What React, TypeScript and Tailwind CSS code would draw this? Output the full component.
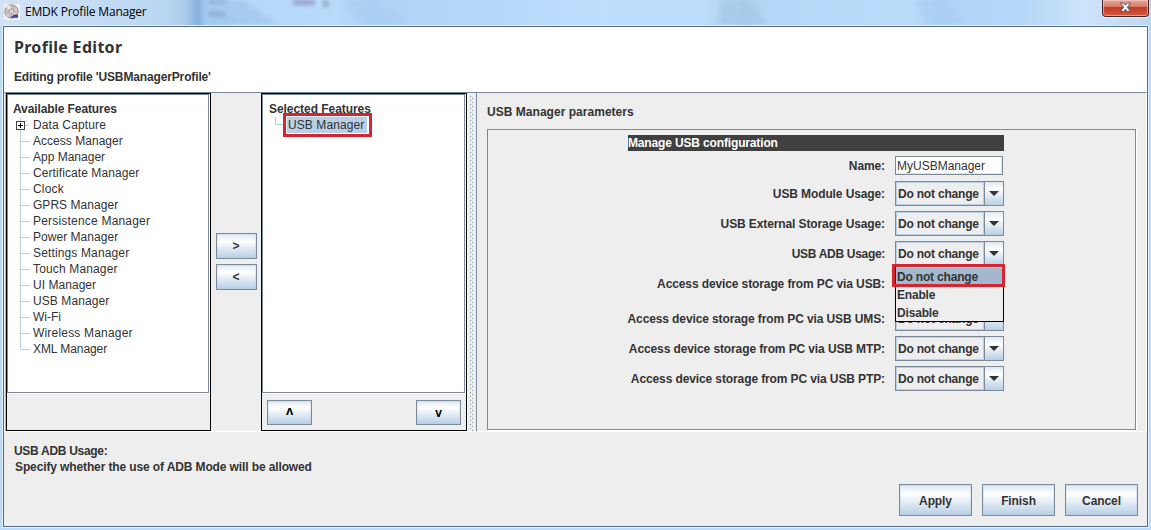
import React from "react";

const features = [
  ["Access Manager", "tracking-[0.03px]"],
  ["App Manager", "tracking-[0px]"],
  ["Certificate Manager", "tracking-[0.08px]"],
  ["Clock", "tracking-[0.2px]"],
  ["GPRS Manager", "tracking-[0.04px]"],
  ["Persistence Manager", "tracking-[0.2px]"],
  ["Power Manager", "tracking-[0.04px]"],
  ["Settings Manager", "tracking-[0.14px]"],
  ["Touch Manager", "tracking-[0.15px]"],
  ["UI Manager", "tracking-[0.04px]"],
  ["USB Manager", "tracking-[0.08px]"],
  ["Wi-Fi", "tracking-[0px]"],
  ["Wireless Manager", "tracking-[0.19px]"],
  ["XML Manager", "tracking-[-0.07px]"],
];

function Button({ label, className }: { label: string; className: string }) {
  return (
    <button
      className={`flex items-center justify-center border border-[#7a8a99] bg-linear-to-b from-[#dde8f3] via-white via-30% to-[#b8cfe5] font-bold shadow-[inset_0_0_0_1px_rgba(184,207,229,0.35)] ${className}`}
    >
      {label}
    </button>
  );
}

function Combo() {
  return (
    <div className="flex h-[25px] w-[109px] border border-[#7a8a99]">
      <div className="flex w-[88px] items-center border border-[#b8cfe5] pl-px font-bold tracking-[-0.2px] whitespace-nowrap">
        Do not change
      </div>
      <div className="flex flex-1 items-center justify-center border-l border-[#7a8a99] bg-linear-to-b from-[#dde8f3] via-white via-30% to-[#b8cfe5]">
        <svg width="10" height="5" viewBox="0 0 10 5">
          <path d="M0 0h10L5 5z" fill="#333" />
        </svg>
      </div>
    </div>
  );
}

interface FormRowProps {
  label: string;
  tracking?: string;
  className?: string;
  children: React.ReactNode;
}

function FormRow({ label, tracking = "tracking-[-0.11px]", className = "mb-[5px]", children }: FormRowProps) {
  return (
    <div className={`flex items-center justify-end ${className}`}>
      <span className={`mr-[10px] font-bold whitespace-nowrap ${tracking}`}>{label}</span>
      <div className="w-[109px]">{children}</div>
    </div>
  );
}

function DiscIcon() {
  return (
    <svg width="16" height="16" viewBox="0 0 16 16">
      <rect width="16" height="16" fill="#f4f2f4" />
      <circle cx="7.5" cy="7.5" r="6.7" fill="#c3bebf" stroke="#989398" />
      <path d="M7.5 7.5L2 3.5A7 7 0 0 1 6 1zM7.5 7.5l6 2a7 7 0 0 1-3 4z" fill="#eceaea" />
      <path d="M7.5 7.5l5-4 1 3zM7.5 7.5L2 11l2 2z" fill="#e0c9cb" />
      <circle cx="7.5" cy="7.5" r="2.5" fill="#f5f3f3" stroke="#a2868b" />
      <circle cx="7.5" cy="7.5" r="0.9" fill="#a99da1" />
      <path d="M12 9.5v2h2" stroke="#d2343d" fill="none" />
      <path d="M7 13h7M9 11.5h5" stroke="#3c38d0" strokeWidth="1.3" />
    </svg>
  );
}

function CloseButton() {
  return (
    <div className="flex h-[17px] w-[47px] items-center justify-center rounded-b-[4px] border border-t-0 border-[#4a1f24] bg-[linear-gradient(180deg,#e2a79c_0%,#d8806f_40%,#c23b22_45%,#d4573f_100%)] pb-[2px] shadow-[inset_0_0_0_1px_rgba(255,210,200,0.55),0_1px_1px_rgba(255,255,255,0.8)]">
      <svg width="13" height="11" viewBox="0 0 13 11">
        <path
          d="M1.5 1h3.2l1.8 2.2L8.3 1h3.2L8.3 5.3l3.3 4.2H8.3L6.5 7.3 4.7 9.5H1.4l3.3-4.2z"
          fill="#fff"
          stroke="#535666"
          strokeWidth="1"
        />
      </svg>
    </div>
  );
}

function DividerDots() {
  return (
    <svg width="4" height="335" className="mt-[3px]">
      <defs>
        <pattern id="bumps" width="4" height="4" patternUnits="userSpaceOnUse">
          <rect width="1" height="1" fill="#7a8a99" />
          <rect x="2" y="2" width="1" height="1" fill="#7a8a99" />
        </pattern>
      </defs>
      <rect width="4" height="335" fill="url(#bumps)" />
    </svg>
  );
}

// Blurred shapes showing through the translucent title bar.
function GlassSmudges() {
  return (
    <svg width="1151" height="25" className="absolute top-0 left-0">
      <defs>
        <filter id="soft" x="-50%" y="-50%" width="200%" height="200%">
          <feGaussianBlur stdDeviation="2" />
        </filter>
      </defs>
      <g filter="url(#soft)">
        <path d="M207 0h27l9 0 35 25h-71z" fill="#9fc6ea" opacity="0.7" />
        <path d="M208 0h18v3h-18zM208 12h17v4h-17z" fill="#6f8fb5" opacity="0.6" />
        <path d="M293 0h22v5h-22z" fill="#8a7fb8" opacity="0.7" />
        <path d="M324 0h4v7h-5z" fill="#6d8199" opacity="0.7" />
        <path d="M340 0h40l30 25h-50z" fill="#a9cdf0" opacity="0.6" />
        <path d="M720 0h30l18 25h-50z" fill="#a3c6e5" opacity="0.6" />
        <path d="M915 0h30l20 25h-40z" fill="#a9cdf1" opacity="0.6" />
      </g>
    </svg>
  );
}

export default function App() {
  return (
    <div className="flex h-[530px] w-[1151px] flex-col overflow-hidden bg-[#bbd9f8] font-['Liberation_Sans',Arial,sans-serif] text-[12px] leading-4 text-[#333]">
      <header className="relative flex h-[25px] shrink-0 items-start bg-[linear-gradient(90deg,#d3e3f5_0px,#c4dcf4_90px,#b9d6f3_165px,#adcbea_185px,#85b2df_198px,#a7cdf2_207px,#b5d7f8_240px,#b9dbfb_335px,#b0d3f5_370px,#b5d8f8_490px,#bfdfff_600px,#bcddfc_700px,#aed1ef_745px,#b5d8f8_770px,#badcfb_915px,#b0d3f5_940px,#b5d7f8_1020px,#cde3fa_1085px,#bdd8f3_1151px)]">
        <GlassSmudges />
        <div className="relative mt-[4px] ml-[4px]">
          <DiscIcon />
        </div>
        <span className="relative mt-[4px] ml-[5px] flex-1 font-['Open_Sans',sans-serif] text-[12px] leading-4 tracking-[-0.2px] text-black">
          EMDK Profile Manager
        </span>
        <div className="relative mr-[2px]">
          <CloseButton />
        </div>
      </header>

      <main className="mr-[2px] ml-[2px] flex h-[503px] flex-col border border-[#e6f2fd]">
        <div className="flex flex-1 flex-col border border-[#566b87] bg-[#eee]">
          <section className="h-[65px] shrink-0 bg-white pl-[10px]">
            <h1 className="pt-[10px] font-['Noto_Sans',sans-serif] text-[16px] leading-5 font-bold tracking-[0.3px]">
              Profile Editor
            </h1>
            <p className="mt-[12px] font-bold tracking-[-0.14px]">Editing profile 'USBManagerProfile'</p>
          </section>

          <section className="flex h-[340px] shrink-0 border-t border-r border-b border-t-[#7a8a99] border-r-white border-b-white">
            <div className="w-[2px] border-r border-[#aeb7c1]" />
            <div className="flex w-[205px] flex-col border border-black">
              <div className="h-[300px] border-r border-b border-white">
                <div className="h-full border border-[#7a8a99] bg-white pt-[6px] pl-[5px]">
                  <div className="font-bold tracking-[-0.1px]">Available Features</div>
                  <div className="flex h-4 items-center">
                    <span className="ml-[3px] flex w-[9px] flex-col items-center self-stretch">
                      <span className="w-px flex-1 bg-[#b8cfe5]" />
                      <span className="flex h-[9px] w-[9px] items-center justify-center border border-[#444] bg-white">
                        <svg width="5" height="5">
                          <path d="M0 2.5h5M2.5 0v5" stroke="#000" />
                        </svg>
                      </span>
                      <span className="w-px flex-1 bg-[#b8cfe5]" />
                    </span>
                    <span className="h-px w-[4px] bg-[#b8cfe5]" />
                    <span className="ml-[4px] tracking-[0.13px]">Data Capture</span>
                  </div>
                  {features.map(([name, tracking], i) => (
                    <div key={name} className="flex h-4 items-center">
                      <span
                        className={`ml-[7px] flex w-px self-start bg-[#b8cfe5] ${i === features.length - 1 ? "h-2" : "h-4"}`}
                      />
                      <span className="h-px w-[9px] bg-[#b8cfe5]" />
                      <span className={`ml-[3px] ${tracking}`}>{name}</span>
                    </div>
                  ))}
                </div>
              </div>
            </div>

            <div className="flex w-[50px] flex-col items-center gap-[5px] pt-[140px]">
              <Button label=">" className="h-[26px] w-[41px]" />
              <Button label="<" className="h-[26px] w-[41px]" />
            </div>

            <div className="flex w-[206px] flex-col border border-black">
              <div className="h-[300px] border-r border-b border-white">
                <div className="h-full border border-[#7a8a99] bg-white pt-[6px] pl-[6px]">
                  <div className="font-bold tracking-[-0.05px]">Selected Features</div>
                  <div className="flex h-4 items-center">
                    <span className="ml-[6px] h-2 w-[8px] self-start border-b border-l border-[#b8cfe5]" />
                    <span className="relative ml-[4px] flex h-[16px] w-[80px] items-center bg-[#b8cfe5] pl-px tracking-[0.08px]">
                      USB Manager
                      <span className="absolute -top-[4px] -left-[4px] h-[24px] w-[89px] border-3 border-[#d9232e]" />
                    </span>
                  </div>
                </div>
              </div>
              <div className="flex justify-between px-[5px] pt-[6px]">
                <Button label="ʌ" className="h-[25px] w-[45px] pb-[3px] text-[13px] text-black" />
                <Button label="v" className="h-[25px] w-[45px] text-black" />
              </div>
            </div>

            <div className="flex w-[9px] justify-center border-l border-white">
              <DividerDots />
            </div>

            <div className="flex-1 border-l border-[#7a8a99] pl-[10px]">
              <h2 className="mt-[11px] font-bold tracking-[0.03px]">USB Manager parameters</h2>
              <div className="mt-[9px] h-[302px] w-[650px] border-r border-b border-white">
                <div className="h-full border border-[#7a8a99]">
                  <div className="ml-[140px] w-[376px] pt-[5px]">
                    <div className="h-[16px] bg-[#404040] pt-px leading-[15px] font-bold tracking-[-0.15px] text-white">
                      Manage USB configuration
                    </div>
                    <div className="pt-[5px]">
                      <FormRow label="Name:" className="mb-[6px]">
                        <div className="flex h-[19px] w-[108px] items-center border border-[#7a8a99] bg-white pt-px pl-px shadow-[inset_-1px_-1px_0_#dce6f0]">
                          MyUSBManager
                        </div>
                      </FormRow>
                      <FormRow label="USB Module Usage:">
                        <Combo />
                      </FormRow>
                      <FormRow label="USB External Storage Usage:">
                        <Combo />
                      </FormRow>
                      <FormRow label="USB ADB Usage:" tracking="tracking-[-0.3px]">
                        <div className="relative">
                          <Combo />
                          <div className="absolute top-[25px] left-0 z-10 h-[56px] w-[109px] border border-black bg-[#eee] pt-px font-bold tracking-[-0.18px]">
                            <div className="h-[18px] bg-[#a3b8cc] pl-px leading-[18px]">Do not change</div>
                            <div className="h-[18px] pl-px leading-[18px]">Enable</div>
                            <div className="h-[18px] pl-px leading-[18px]">Disable</div>
                            <div className="absolute -top-[3px] -left-[4px] h-[23px] w-[113px] border-3 border-[#d9232e]" />
                          </div>
                        </div>
                      </FormRow>
                      <FormRow label="Access device storage from PC via USB:" className="mb-[10px]">
                        <div className="h-[25px]" />
                      </FormRow>
                      <FormRow label="Access device storage from PC via USB UMS:">
                        <Combo />
                      </FormRow>
                      <FormRow label="Access device storage from PC via USB MTP:">
                        <Combo />
                      </FormRow>
                      <FormRow label="Access device storage from PC via USB PTP:">
                        <Combo />
                      </FormRow>
                    </div>
                  </div>
                </div>
              </div>
            </div>
          </section>

          <footer className="flex flex-1 flex-col pt-[11px] pr-[9px] pl-[10px] font-bold">
            <div className="tracking-[-0.3px]">USB ADB Usage:</div>
            <div className="pl-px tracking-[-0.12px]">Specify whether the use of ADB Mode will be allowed</div>
            <div className="mt-[9px] flex justify-end gap-[10px]">
              <Button label="Apply" className="h-[32px] w-[73px] pt-px tracking-[-0.1px]" />
              <Button label="Finish" className="h-[32px] w-[73px] pt-px tracking-[-0.1px]" />
              <Button label="Cancel" className="h-[32px] w-[73px] pt-px tracking-[-0.1px]" />
            </div>
          </footer>
        </div>
      </main>
    </div>
  );
}
